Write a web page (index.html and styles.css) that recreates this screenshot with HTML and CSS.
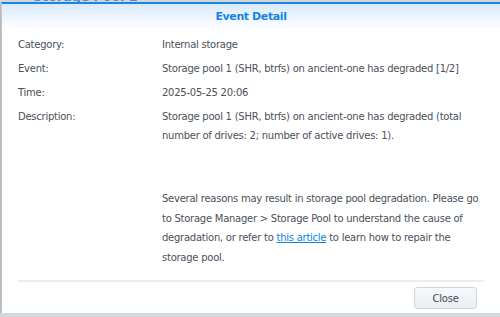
FILE: index.html
```html
<!DOCTYPE html>
<html>
<head>
    <title>Event Detail</title>
    <meta charset="utf-8"/>
    <link rel="stylesheet" href="styles.css">
</head>
<body>
    <div class="behind">
        <span class="behind-title">Storage Pool 1</span>
    </div>

    <div class="dialog">
        <div class="dialog-head">Event Detail</div>

        <div class="dialog-body">
            <div class="row">
                <div class="label">Category:</div>
                <div class="value">Internal storage</div>
            </div>
            <div class="row">
                <div class="label">Event:</div>
                <div class="value">Storage pool 1 (SHR, btrfs) on ancient-one has degraded [1/2]</div>
            </div>
            <div class="row">
                <div class="label">Time:</div>
                <div class="value">2025-05-25 20:06</div>
            </div>
            <div class="row">
                <div class="label">Description:</div>
                <div class="value">
                    <p class="desc">Storage pool 1 (SHR, btrfs) on ancient-one has degraded (total number of drives: 2; number of active drives: 1).</p>
                    <p class="desc hint">Several reasons may result in storage pool degradation. Please go to Storage Manager &gt; Storage Pool to understand the cause of degradation, or refer to <a href="#" class="link">this article</a> to learn how to repair the storage pool.</p>
                </div>
            </div>
        </div>

        <div class="dialog-foot">
            <button type="button" class="close-btn">Close</button>
        </div>
    </div>
</body>
</html>
```

FILE: styles.css
```css
body {
    margin: 0px;
    padding: 0px;
    background-color: #d5d8db;
    font-family: "DejaVu Sans", Verdana, sans-serif;
    font-size: 10px;
    letter-spacing: -0.25px;
    color: #4b5159;
    overflow: hidden;
}

.behind {
    height: 2px;
    overflow: hidden;
    padding-left: 33px;
}
.behind-title {
    display: block;
    margin-top: -11px;
    font-size: 13px;
    font-weight: bold;
    color: #3f8fe0;
}

.dialog {
    margin-left: 1px;
    height: 309px;
    background-color: #fff;
    border-top: 2px solid #1b87e4;
    border-left: 1px solid #c4c7ca;
    box-shadow: 0px 2px 3px rgba(0, 0, 0, 0.35);
    display: flex;
    flex-direction: column;
}

.dialog-head {
    height: 26px;
    line-height: 26px;
    text-align: center;
    font-size: 11px;
    letter-spacing: -0.4px;
    font-weight: bold;
    color: #1585e3;
    background: linear-gradient(#d9eafb, #fff);
}

.dialog-body {
    flex: 1;
    padding: 5px 16px 0px 16px;
}

.row {
    display: grid;
    grid-template-columns: 144px 1fr;
    line-height: 19px;
    margin-bottom: 5px;
}

.desc {
    margin: 0px;
}
.desc.hint {
    margin-top: 44px;
    line-height: 19.5px;
}

.link {
    color: #0a84e0;
}

.dialog-foot {
    margin: 0px 16px 4px 16px;
    border-top: 2px solid #ececec;
    padding-top: 5px;
    display: flex;
    justify-content: flex-end;
}

.close-btn {
    width: 63px;
    height: 22px;
    margin-right: 7px;
    border: 1px solid #cdd7e1;
    border-radius: 3px;
    background: linear-gradient(#f7f9fb, #e8eef4);
    font-family: "DejaVu Sans", Verdana, sans-serif;
    font-size: 10px;
    letter-spacing: -0.2px;
    color: #454b52;
    cursor: pointer;
}
```
